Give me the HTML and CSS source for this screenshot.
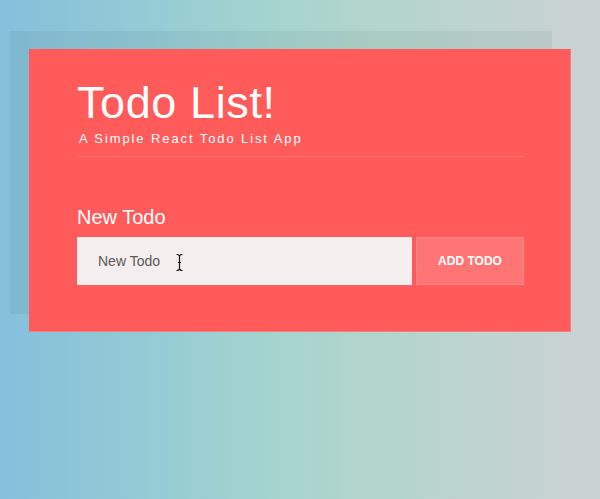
FILE: index.html
```html
<!DOCTYPE html>
<html lang="en">
<head>
<meta charset="utf-8">
<title>Todo List!</title>
<link rel="stylesheet" href="styles.css">
</head>
<body>
  <div class="stage">
    <div class="card">
      <header class="header">
        <h1 class="title">Todo List!</h1>
        <p class="subtitle">A Simple React Todo List App</p>
      </header>
      <form class="form">
        <label class="label" for="todo">New Todo</label>
        <div class="row">
          <div class="field">
            <input id="todo" class="input" type="text" placeholder="New Todo">
            <svg class="ibeam" width="7" height="17" viewBox="0 0 7 17" aria-hidden="true">
              <path d="M0.5 0.5 Q3.5 0.5 3.5 2.5 Q3.5 0.5 6.5 0.5 M3.5 2.5 V14.5 M0.5 16.5 Q3.5 16.5 3.5 14.5 Q3.5 16.5 6.5 16.5 M2 8.5 H5" fill="none" stroke="#111" stroke-width="1.2"/>
            </svg>
          </div>
          <button type="button" class="button">ADD TODO</button>
        </div>
      </form>
    </div>
  </div>
</body>
</html>
```
FILE: styles.css
```css
html, body {
  margin: 0;
  height: 100%;
}
body {
  background: linear-gradient(90deg, #85bfdb 0%, #94cbd5 25%, #a5d4cf 45%, #b2d5cb 62%, #bdd4ce 78%, #cbd2d3 100%);
  font-family: "Liberation Sans", Arial, Helvetica, sans-serif;
  padding: 49px 0 0 29px;
  box-sizing: border-box;
}
.stage {
  position: relative;
  width: 542px;
}
.stage::before {
  content: "";
  position: absolute;
  left: -19px;
  top: -18px;
  width: 542px;
  height: 283px;
  background: rgba(40, 70, 80, 0.07);
}
.card {
  position: relative;
  box-sizing: border-box;
  width: 542px;
  height: 283px;
  background: #ff5b5b;
  border: 1px solid #f87c7c;
  border-top: 0;
  border-left: 0;
  padding: 32px 46px 0 48px;
  color: #fff;
}
.header {
  border-bottom: 1px solid rgba(255, 255, 255, 0.13);
  padding-bottom: 9px;
}
.title {
  margin: 0;
  font-size: 45px;
  line-height: 44px;
  font-weight: normal;
  letter-spacing: 0.6px;
}
.subtitle {
  margin: 6px 0 0 2px;
  font-size: 13px;
  line-height: 16px;
  letter-spacing: 1.9px;
}
.form {
  display: flex;
  flex-direction: column;
  padding-top: 48px;
}
.label {
  font-size: 20px;
  line-height: 24px;
  margin-bottom: 8px;
}
.row {
  display: flex;
  gap: 4px;
  height: 48px;
}
.field {
  position: relative;
  flex: 1;
  display: flex;
}
.input {
  flex: 1;
  margin: 0;
  border: 0;
  outline: 0;
  background: #f4eeee;
  padding: 0 0 0 21px;
  font-family: "Liberation Sans", Arial, Helvetica, sans-serif;
  font-size: 14px;
  color: #555;
}
.input::placeholder {
  color: #5b5959;
  opacity: 1;
}
.ibeam {
  position: absolute;
  left: 99px;
  top: 17px;
}
.button {
  width: 108px;
  margin: 0;
  border: 1px solid rgba(255, 255, 255, 0.12);
  background: #ff7575;
  color: #fff;
  font-family: "Liberation Sans", Arial, Helvetica, sans-serif;
  font-weight: bold;
  font-size: 12px;
  padding: 0;
}
```
